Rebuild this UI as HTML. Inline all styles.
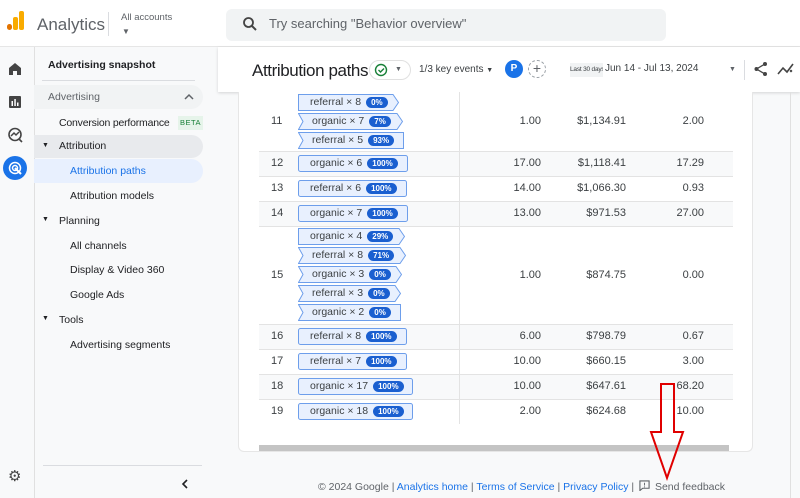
<!DOCTYPE html>
<html><head><meta charset="utf-8"><style>
*{box-sizing:border-box;margin:0;padding:0}
body{width:800px;height:498px;overflow:hidden;background:#f8f9fa;font-family:"Liberation Sans",Arial,sans-serif;color:#202124;position:relative}
.a{position:absolute}
.hdr{left:0;top:0;width:800px;height:47px;background:#fff;border-bottom:1px solid #e6e6e6}
.nav{font-size:10.5px;color:#202124;white-space:nowrap}
.chip{position:absolute;left:298px;height:17px;font-size:10.5px;color:#3c4043}
.chip svg{position:absolute;left:0;top:0}
.chip span.l{position:absolute;left:12px;top:2px;white-space:nowrap}
.b{display:inline-block;background:#1a5fd0;color:#fff;font-size:8px;font-weight:bold;border-radius:6px;padding:0 5px;height:11px;line-height:11px;margin-left:5px;vertical-align:0}
.num{position:absolute;font-size:11px;color:#3c4043;text-align:right}
.rown{position:absolute;left:271px;font-size:11px;color:#3c4043}
.shade{position:absolute;left:259px;width:474px;background:#f8f9fa}
.hl{position:absolute;left:259px;width:474px;height:1px;background:#e3e3e3}
.foot a{color:#1a73e8;text-decoration:none}
</style></head><body>
<div class="a hdr"></div>
<div class="a" style="left:7px;top:24px;width:5px;height:6px;background:#e37400;border-radius:3px"></div>
<div class="a" style="left:13px;top:17px;width:5px;height:13px;background:#f9ab00;border-radius:2px"></div>
<div class="a" style="left:19px;top:11px;width:5px;height:19px;background:#f9ab00;border-radius:2px"></div>
<div class="a" style="left:37px;top:15px;font-size:17px;color:#5f6368">Analytics</div>
<div class="a" style="left:108px;top:12px;width:1px;height:24px;background:#dadce0"></div>
<div class="a" style="left:121px;top:12px;font-size:9.5px;color:#5f6368">All accounts</div>
<div class="a" style="left:122px;top:27px;font-size:8px;color:#5f6368">▼</div>
<div class="a" style="left:226px;top:9px;width:440px;height:32px;background:#f1f3f4;border-radius:6px"></div>
<svg class="a" style="left:242px;top:16px" width="16" height="16" viewBox="0 0 16 16"><circle cx="6.5" cy="6.5" r="4.5" fill="none" stroke="#444" stroke-width="1.8"/><path d="M10 10l4 4" stroke="#444" stroke-width="2"/></svg>
<div class="a" style="left:269px;top:16px;font-size:13px;color:#5f6368">Try searching "Behavior overview"</div>
<div class="a" style="left:34px;top:47px;width:1px;height:451px;background:#e0e0e0"></div>
<svg class="a" style="left:8px;top:62px" width="14" height="14" viewBox="0 0 14 14"><path d="M1 6L7 1l6 5v7H9V9H5v4H1z" fill="#444"/></svg>
<svg class="a" style="left:8px;top:95px" width="14" height="14" viewBox="0 0 14 14"><rect x="1" y="1" width="12" height="12" rx="1" fill="#444"/><rect x="3.5" y="6" width="1.5" height="5" fill="#fff"/><rect x="6.3" y="4" width="1.5" height="7" fill="#fff"/><rect x="9" y="7.5" width="1.5" height="3.5" fill="#fff"/></svg>
<svg class="a" style="left:7px;top:127px" width="16" height="16" viewBox="0 0 16 16"><circle cx="8" cy="7.5" r="6" fill="none" stroke="#444" stroke-width="1.6"/><path d="M4 9l3-3 2 2 3-3" fill="none" stroke="#444" stroke-width="1.5"/><path d="M12 12l3 3" stroke="#444" stroke-width="1.6"/></svg>
<div class="a" style="left:3px;top:156px;width:24px;height:24px;border-radius:12px;background:#1a73e8"></div>
<svg class="a" style="left:7px;top:160px" width="16" height="16" viewBox="0 0 16 16"><circle cx="8" cy="8" r="5.5" fill="none" stroke="#fff" stroke-width="1.5"/><circle cx="8" cy="8" r="2.5" fill="none" stroke="#fff" stroke-width="1.5"/><path d="M8 8l6 6" stroke="#fff" stroke-width="2"/></svg>
<div class="a" style="left:8px;top:467px;font-size:15px;color:#444">⚙</div>
<div class="a nav" style="left:48px;top:59px;font-weight:bold">Advertising snapshot</div>
<div class="a" style="left:42px;top:80px;width:153px;height:1px;background:#dadce0"></div>
<div class="a" style="left:34px;top:85px;width:169px;height:24px;background:#f1f3f4;border-radius:0 12px 12px 0"></div>
<div class="a nav" style="left:48px;top:91px;color:#5f6368">Advertising</div>
<svg class="a" style="left:184px;top:93px" width="10" height="7" viewBox="0 0 10 7"><path d="M1 6l4-4 4 4" fill="none" stroke="#5f6368" stroke-width="1.5"/></svg>
<div class="a nav" style="left:59px;top:117px;letter-spacing:-0.2px">Conversion performance</div>
<div class="a" style="left:178px;top:116px;width:25px;height:14px;background:#e6f4ea;color:#188038;font-size:7.5px;letter-spacing:.5px;line-height:14px;text-align:center">BETA</div>
<div class="a" style="left:34px;top:135px;width:169px;height:23px;background:#e8eaed;border-radius:0 12px 12px 0"></div>
<div class="a" style="left:42px;top:142px;font-size:7px">▼</div>
<div class="a nav" style="left:59px;top:140px">Attribution</div>
<div class="a" style="left:34px;top:159px;width:169px;height:24px;background:#e8f0fe;border-radius:0 12px 12px 0"></div>
<div class="a nav" style="left:70px;top:165px;color:#1a73e8">Attribution paths</div>
<div class="a nav" style="left:70px;top:190px">Attribution models</div>
<div class="a" style="left:42px;top:216px;font-size:7px">▼</div>
<div class="a nav" style="left:59px;top:215px">Planning</div>
<div class="a nav" style="left:70px;top:240px">All channels</div>
<div class="a nav" style="left:70px;top:264px">Display &amp; Video 360</div>
<div class="a nav" style="left:70px;top:289px">Google Ads</div>
<div class="a" style="left:42px;top:315px;font-size:7px">▼</div>
<div class="a nav" style="left:59px;top:314px">Tools</div>
<div class="a nav" style="left:70px;top:339px">Advertising segments</div>
<div class="a" style="left:43px;top:465px;width:159px;height:1px;background:#dadce0"></div>
<svg class="a" style="left:181px;top:479px" width="8" height="10" viewBox="0 0 8 10"><path d="M6 1L2 5l4 4" fill="none" stroke="#202124" stroke-width="1.6"/></svg>
<div class="a" style="left:218px;top:47px;width:582px;height:45px;background:#fff;box-shadow:0 1px 3px rgba(0,0,0,.15)"></div>
<div class="a" style="left:252px;top:61px;font-size:17px;letter-spacing:-0.4px;color:#202124">Attribution paths</div>
<div class="a" style="left:369px;top:60px;width:42px;height:20px;border:1px solid #e0e0e0;border-radius:10px"></div>
<svg class="a" style="left:374px;top:63px" width="14" height="14" viewBox="0 0 14 14"><circle cx="7" cy="7" r="5.5" fill="none" stroke="#188038" stroke-width="1.4"/><path d="M4.5 7l2 2 3.5-3.5" fill="none" stroke="#188038" stroke-width="1.4"/></svg>
<div class="a" style="left:395px;top:66px;font-size:7px;color:#5f6368">▼</div>
<div class="a" style="left:419px;top:64px;font-size:10px;color:#3c4043">1/3 key events <span style="font-size:7px">▼</span></div>
<div class="a" style="left:505px;top:60px;width:18px;height:18px;border-radius:9px;background:#1a73e8;color:#fff;font-size:10px;font-weight:bold;text-align:center;line-height:18px">P</div>
<div class="a" style="left:528px;top:60px;width:18px;height:18px;border-radius:9px;border:1px dashed #9aa0a6;color:#5f6368;font-size:14px;text-align:center;line-height:15px">+</div>
<div class="a" style="left:570px;top:63px;width:33px;height:14px;background:#f1f3f4;font-size:6.5px;letter-spacing:-0.2px;color:#3c4043;line-height:14px;text-align:center;white-space:nowrap;overflow:hidden">Last 30 days</div>
<div class="a" style="left:605px;top:63px;font-size:10px;color:#3c4043;white-space:nowrap">Jun 14 - Jul 13, 2024</div>
<div class="a" style="left:729px;top:66px;font-size:7px;color:#5f6368">▼</div>
<div class="a" style="left:744px;top:60px;width:1px;height:20px;background:#dadce0"></div>
<svg class="a" style="left:753px;top:61px" width="16" height="16" viewBox="0 0 16 16"><circle cx="12" cy="3" r="2" fill="#444"/><circle cx="3.5" cy="8" r="2" fill="#444"/><circle cx="12" cy="13" r="2" fill="#444"/><path d="M12 3L3.5 8 12 13" fill="none" stroke="#444" stroke-width="1.3"/></svg>
<svg class="a" style="left:777px;top:61px" width="18" height="16" viewBox="0 0 18 16"><path d="M1 13l5-6 4 4 6-8" fill="none" stroke="#444" stroke-width="1.6"/><path d="M13 9l2 2M15 9l-2 2" stroke="#444" stroke-width="1"/></svg>
<div class="a" style="left:238px;top:92px;width:515px;height:360px;background:#fff;border:1px solid #e6e6e6;border-top:none;border-radius:0 0 6px 6px"></div>
<div class="a" style="left:790px;top:92px;width:1px;height:406px;background:#e0e0e0"></div>
<div class="shade" style="top:151px;height:25px"></div>
<div class="shade" style="top:201px;height:25px"></div>
<div class="shade" style="top:324px;height:25px"></div>
<div class="shade" style="top:374px;height:25px"></div>
<div class="hl" style="top:151px"></div><div class="hl" style="top:176px"></div><div class="hl" style="top:201px"></div><div class="hl" style="top:226px"></div><div class="hl" style="top:324px"></div><div class="hl" style="top:349px"></div><div class="hl" style="top:374px"></div><div class="hl" style="top:399px"></div>
<div class="a" style="left:459px;top:92px;width:1px;height:332px;background:#e3e3e3"></div>
<div class="a" style="left:259px;top:445px;width:470px;height:6px;background:#c4c4c4"></div>
<div class="rown" style="top:115px">11</div>
<div class="rown" style="top:157px">12</div>
<div class="rown" style="top:182px">13</div>
<div class="rown" style="top:207px">14</div>
<div class="rown" style="top:269px">15</div>
<div class="rown" style="top:330px">16</div>
<div class="rown" style="top:355px">17</div>
<div class="rown" style="top:380px">18</div>
<div class="rown" style="top:405px">19</div>
<div class="num" style="left:481px;width:60px;top:115px">1.00</div><div class="num" style="left:556px;width:70px;top:115px">$1,134.91</div><div class="num" style="left:644px;width:60px;top:115px">2.00</div>
<div class="num" style="left:481px;width:60px;top:157px">17.00</div><div class="num" style="left:556px;width:70px;top:157px">$1,118.41</div><div class="num" style="left:644px;width:60px;top:157px">17.29</div>
<div class="num" style="left:481px;width:60px;top:182px">14.00</div><div class="num" style="left:556px;width:70px;top:182px">$1,066.30</div><div class="num" style="left:644px;width:60px;top:182px">0.93</div>
<div class="num" style="left:481px;width:60px;top:207px">13.00</div><div class="num" style="left:556px;width:70px;top:207px">$971.53</div><div class="num" style="left:644px;width:60px;top:207px">27.00</div>
<div class="num" style="left:481px;width:60px;top:269px">1.00</div><div class="num" style="left:556px;width:70px;top:269px">$874.75</div><div class="num" style="left:644px;width:60px;top:269px">0.00</div>
<div class="num" style="left:481px;width:60px;top:330px">6.00</div><div class="num" style="left:556px;width:70px;top:330px">$798.79</div><div class="num" style="left:644px;width:60px;top:330px">0.67</div>
<div class="num" style="left:481px;width:60px;top:355px">10.00</div><div class="num" style="left:556px;width:70px;top:355px">$660.15</div><div class="num" style="left:644px;width:60px;top:355px">3.00</div>
<div class="num" style="left:481px;width:60px;top:380px">10.00</div><div class="num" style="left:556px;width:70px;top:380px">$647.61</div><div class="num" style="left:644px;width:60px;top:380px">68.20</div>
<div class="num" style="left:481px;width:60px;top:405px">2.00</div><div class="num" style="left:556px;width:70px;top:405px">$624.68</div><div class="num" style="left:644px;width:60px;top:405px">10.00</div>
<div class="chip" style="top:94px;width:101px"><svg width="101" height="17"><polygon points="0.5,0.5 95,0.5 100.5,8.5 95,16.5 0.5,16.5" fill="#e8f0fe" stroke="#6d9eeb"/></svg><span class="l">referral × 8<span class="b">0%</span></span></div>
<div class="chip" style="top:113px;width:105px"><svg width="105" height="17"><polygon points="0.5,0.5 99,0.5 104.5,8.5 99,16.5 0.5,16.5 5,8.5" fill="#e8f0fe" stroke="#6d9eeb"/></svg><span class="l" style="left:14px">organic × 7<span class="b">7%</span></span></div>
<div class="chip" style="top:132px;width:106px"><svg width="106" height="17"><polygon points="0.5,0.5 105.5,0.5 105.5,16.5 0.5,16.5 5,8.5" fill="#e8f0fe" stroke="#6d9eeb"/></svg><span class="l" style="left:14px">referral × 5<span class="b">93%</span></span></div>
<div class="chip" style="top:155px;width:110px"><svg width="110" height="17"><rect x="0.5" y="0.5" width="109" height="16" rx="2" fill="#e8f0fe" stroke="#6d9eeb"/></svg><span class="l">organic × 6<span class="b">100%</span></span></div>
<div class="chip" style="top:180px;width:109px"><svg width="109" height="17"><rect x="0.5" y="0.5" width="108" height="16" rx="2" fill="#e8f0fe" stroke="#6d9eeb"/></svg><span class="l">referral × 6<span class="b">100%</span></span></div>
<div class="chip" style="top:205px;width:110px"><svg width="110" height="17"><rect x="0.5" y="0.5" width="109" height="16" rx="2" fill="#e8f0fe" stroke="#6d9eeb"/></svg><span class="l">organic × 7<span class="b">100%</span></span></div>
<div class="chip" style="top:228px;width:107px"><svg width="107" height="17"><polygon points="0.5,0.5 101,0.5 106.5,8.5 101,16.5 0.5,16.5" fill="#e8f0fe" stroke="#6d9eeb"/></svg><span class="l">organic × 4<span class="b">29%</span></span></div>
<div class="chip" style="top:247px;width:108px"><svg width="108" height="17"><polygon points="0.5,0.5 102,0.5 107.5,8.5 102,16.5 0.5,16.5 5,8.5" fill="#e8f0fe" stroke="#6d9eeb"/></svg><span class="l" style="left:14px">referral × 8<span class="b">71%</span></span></div>
<div class="chip" style="top:266px;width:104px"><svg width="104" height="17"><polygon points="0.5,0.5 98,0.5 103.5,8.5 98,16.5 0.5,16.5 5,8.5" fill="#e8f0fe" stroke="#6d9eeb"/></svg><span class="l" style="left:14px">organic × 3<span class="b">0%</span></span></div>
<div class="chip" style="top:285px;width:103px"><svg width="103" height="17"><polygon points="0.5,0.5 97,0.5 102.5,8.5 97,16.5 0.5,16.5 5,8.5" fill="#e8f0fe" stroke="#6d9eeb"/></svg><span class="l" style="left:14px">referral × 3<span class="b">0%</span></span></div>
<div class="chip" style="top:304px;width:103px"><svg width="103" height="17"><polygon points="0.5,0.5 102.5,0.5 102.5,16.5 0.5,16.5 5,8.5" fill="#e8f0fe" stroke="#6d9eeb"/></svg><span class="l" style="left:14px">organic × 2<span class="b">0%</span></span></div>
<div class="chip" style="top:328px;width:109px"><svg width="109" height="17"><rect x="0.5" y="0.5" width="108" height="16" rx="2" fill="#e8f0fe" stroke="#6d9eeb"/></svg><span class="l">referral × 8<span class="b">100%</span></span></div>
<div class="chip" style="top:353px;width:109px"><svg width="109" height="17"><rect x="0.5" y="0.5" width="108" height="16" rx="2" fill="#e8f0fe" stroke="#6d9eeb"/></svg><span class="l">referral × 7<span class="b">100%</span></span></div>
<div class="chip" style="top:378px;width:115px"><svg width="115" height="17"><rect x="0.5" y="0.5" width="114" height="16" rx="2" fill="#e8f0fe" stroke="#6d9eeb"/></svg><span class="l">organic × 17<span class="b">100%</span></span></div>
<div class="chip" style="top:403px;width:115px"><svg width="115" height="17"><rect x="0.5" y="0.5" width="114" height="16" rx="2" fill="#e8f0fe" stroke="#6d9eeb"/></svg><span class="l">organic × 18<span class="b">100%</span></span></div>
<div class="a foot" style="left:318px;top:480px;font-size:10.5px;color:#5f6368;white-space:nowrap">© 2024 Google | <a>Analytics home</a> | <a>Terms of Service</a> | <a>Privacy Policy</a> | <svg width="11" height="11" viewBox="0 0 12 12" style="vertical-align:-1px;margin:0 2px 0 2px"><path d="M1 1h10v8H4l-3 2.5z" fill="none" stroke="#5f6368" stroke-width="1.2"/><path d="M6 3v3M6 7v1" stroke="#5f6368" stroke-width="1"/></svg> Send feedback</div>
<svg class="a" style="left:640px;top:375px" width="50" height="110" viewBox="0 0 50 110"><polygon points="21,9 34,9 34,57 43,57 27,103 11,57 21,57" fill="none" stroke="#e00000" stroke-width="2"/></svg>
</body></html>
